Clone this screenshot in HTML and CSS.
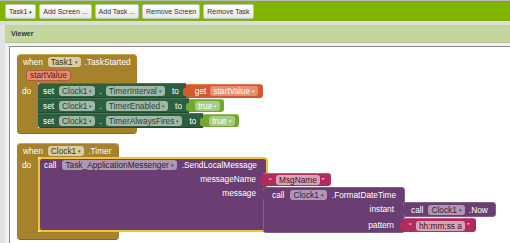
FILE: index.html
```html
<!DOCTYPE html>
<html>
<head>
    <link rel="stylesheet" href="styles.css">
    <meta name="viewport" content="width=device-width, initial-scale=1.0">
    <title>Blocks Editor</title>
</head>
<body>
    <div class="toolbar">
        <button class="tb-btn">Task1 <span class="tb-caret">▾</span></button>
        <button class="tb-btn">Add Screen ...</button>
        <button class="tb-btn">Add Task ...</button>
        <button class="tb-btn">Remove Screen</button>
        <button class="tb-btn">Remove Task</button>
    </div>
    <div class="strip"></div>
    <div class="viewer">
        <div class="viewer-head">Viewer</div>
        <div class="workspace">

            <!-- when Task1.TaskStarted -->
            <div class="event ev-started">
                <div class="hat">
                    <div class="row"><span>when</span><span class="pill pill-ev">Task1 <span class="caret">▾</span></span><span>.TaskStarted</span></div>
                    <div class="row row-param"><span class="param">startValue</span></div>
                </div>
                <div class="ev-body">
                    <div class="spine">do</div>
                    <div class="stack">
                        <div class="stmt">
                            <div class="setter"><span class="kw">set</span><span class="pill pill-set">Clock1 <span class="caret">▾</span></span><span>.</span><span class="pill pill-set">TimerInterval <span class="caret">▾</span></span><span class="to">to</span></div>
                            <div class="val val-get"><span>get</span><span class="pill pill-get">startValue <span class="caret">▾</span></span></div>
                        </div>
                        <div class="stmt">
                            <div class="setter"><span class="kw">set</span><span class="pill pill-set">Clock1 <span class="caret">▾</span></span><span>.</span><span class="pill pill-set">TimerEnabled <span class="caret">▾</span></span><span class="to">to</span></div>
                            <div class="val val-bool"><span class="pill pill-bool">true <span class="caret">▾</span></span></div>
                        </div>
                        <div class="stmt">
                            <div class="setter"><span class="kw">set</span><span class="pill pill-set">Clock1 <span class="caret">▾</span></span><span>.</span><span class="pill pill-set">TimerAlwaysFires <span class="caret">▾</span></span><span class="to">to</span></div>
                            <div class="val val-bool"><span class="pill pill-bool">true <span class="caret">▾</span></span></div>
                        </div>
                    </div>
                </div>
                <div class="foot"></div>
            </div>

            <!-- when Clock1.Timer -->
            <div class="event ev-timer">
                <div class="hat">
                    <div class="row"><span>when</span><span class="pill pill-ev">Clock1 <span class="caret">▾</span></span><span>.Timer</span></div>
                </div>
                <div class="ev-body">
                    <div class="spine">do</div>
                    <div class="call">
                        <div class="row"><span class="kw">call</span><span class="pill pill-call">Task_ApplicationMessenger <span class="caret">▾</span></span><span>.SendLocalMessage</span></div>
                        <div class="input in-name">
                            <span class="in-label">messageName</span>
                            <div class="val val-text"><span class="quote">“</span><span class="pill pill-text">MsgName</span><span class="quote">”</span></div>
                        </div>
                        <div class="input in-top">
                            <span class="in-label">message</span>
                            <div class="val fmt">
                                <div class="row"><span class="kw">call</span><span class="pill pill-call">Clock1 <span class="caret">▾</span></span><span>.FormatDateTime</span></div>
                                <div class="input in-instant">
                                    <span class="in-label">instant</span>
                                    <div class="val val-method"><span class="kw">call</span><span class="pill pill-call">Clock1 <span class="caret">▾</span></span><span>.Now</span></div>
                                </div>
                                <div class="input in-pattern">
                                    <span class="in-label">pattern</span>
                                    <div class="val val-text"><span class="quote">“</span><span class="pill pill-text">hh:mm:ss a</span><span class="quote">”</span></div>
                                </div>
                            </div>
                        </div>
                    </div>
                </div>
                <div class="foot"></div>
            </div>

        </div>
    </div>
</body>
</html>
```

FILE: styles.css
```css
*{
    box-sizing: border-box;
}
body{
    margin: 0;
    width: 510px;
    height: 243px;
    overflow: hidden;
    background: #e2e2e2;
    font-family: "Liberation Sans", Arial, sans-serif;
}

/* top toolbar */
.toolbar{
    height: 21px;
    background: #7fb500;
    border-top: 1px solid #b9b9b9;
    display: flex;
    align-items: center;
    gap: 3px;
    padding: 0 5px;
}
.tb-btn{
    height: 15px;
    padding: 0 3px;
    font-family: "Liberation Sans", Arial, sans-serif;
    font-size: 7px;
    color: #333;
    background: linear-gradient(#fdfdfd, #e8e8e8);
    border: 1px solid #c2c2c2;
    border-radius: 2px;
}
.tb-caret{
    font-size: 5px;
}
.strip{
    height: 4px;
    background: #dcdcdc;
}

/* viewer panel */
.viewer{
    margin-left: 5px;
    height: 218px;
    background: #efefef;
}
.viewer-head{
    height: 18px;
    background: #c5d69c;
    border-bottom: 1px solid #b4c58a;
    padding-left: 6px;
    display: flex;
    align-items: center;
    font-size: 7px;
    font-weight: bold;
    color: #333;
}
.workspace{
    position: relative;
    margin: 3px 0 0 4px;
    height: 200px;
    background: #fff;
    border-top: 1px solid #8a8a8a;
    border-left: 1px solid #8a8a8a;
}

/* blocks */
.event{
    position: absolute;
    display: flex;
    flex-direction: column;
    align-items: flex-start;
    color: #fff;
    font-size: 8.3px;
}
.ev-started{
    left: 7px;
    top: 7px;
}
.ev-timer{
    left: 7px;
    top: 96px;
}
.hat{
    background: #a6822c;
    border-top: 1px solid #c4a456;
    border-radius: 4px 4px 0 0;
    padding: 1px 6px 2px 6px;
}
.ev-started .hat, .ev-started .foot{
    width: 120px;
}
.ev-timer .hat, .ev-timer .foot{
    width: 102px;
}
.ev-timer .hat{
    padding-bottom: 0;
}
.row{
    display: flex;
    align-items: center;
    gap: 4px;
    height: 12px;
    white-space: nowrap;
}
.row-param{
    margin-top: 1px;
    padding-left: 3px;
}
.param{
    height: 11px;
    line-height: 9px;
    padding: 0 3px;
    background: #e38c75;
    border: 1px solid #b45840;
    border-radius: 3px;
    color: #5e1d10;
}
.ev-body{
    display: flex;
    align-items: flex-start;
}
.spine{
    width: 21px;
    align-self: stretch;
    background: #a6822c;
    padding: 1px 0 0 5px;
    line-height: 14px;
}
.foot{
    background: #a6822c;
    border-bottom: 1px solid #87691f;
    border-radius: 0 0 4px 4px;
    height: 6px;
}
.ev-timer .foot{
    height: 8px;
}
.stack{
    display: flex;
    flex-direction: column;
}
.stmt{
    display: flex;
    align-items: center;
    height: 15px;
}
.setter{
    height: 15px;
    background: #2d5f3f;
    border-top: 1px solid #46775a;
    border-bottom: 1px solid #1f4a30;
    display: flex;
    align-items: center;
    gap: 4px;
    padding: 0 7px 0 5px;
    white-space: nowrap;
}
.stmt:first-child .setter{
    border-radius: 3px 0 0 0;
}
.stmt:last-child .setter{
    border-radius: 0 0 0 3px;
}
.kw{
    margin-right: 1px;
}
.to{
    margin-left: 3px;
}

.pill{
    display: inline-flex;
    align-items: center;
    gap: 2px;
    height: 10px;
    padding: 0 3px;
    border-radius: 3px;
    line-height: 10px;
    color: #333;
    white-space: nowrap;
    flex-shrink: 0;
}
.caret{
    font-size: 5px;
    opacity: 0.8;
}
.pill-ev{
    background: #dccba3;
    margin-left: 1px;
}
.pill-set{
    background: #9fb9a9;
    color: #2f4437;
}
.pill-get{
    background: #e58f72;
    color: #fff;
}
.pill-bool{
    background: #a8cb84;
    color: #fff;
}
.pill-call{
    background: #ae97b5;
    color: #2e2233;
}
.pill-text{
    background: #dba1b6;
    color: #3a1524;
}

/* value blocks */
.val{
    position: relative;
    display: flex;
    align-items: center;
    gap: 4px;
    flex-shrink: 0;
    white-space: nowrap;
    border-radius: 0 3px 3px 0;
}
.val::before{
    content: "";
    position: absolute;
    left: -3px;
    top: 3px;
    width: 4px;
    height: 8px;
    background: inherit;
    border-radius: 2px 0 0 2px;
}
.val-get{
    height: 14px;
    background: #d05c2c;
    border-top: 1px solid #e07a50;
    padding: 0 5px 0 9px;
}
.val-bool{
    height: 13px;
    background: #74a72f;
    border-top: 1px solid #93c151;
    padding: 0 4px 0 6px;
}
.val-text{
    height: 13px;
    background: #b12c5d;
    border-top: 1px solid #c85582;
    padding: 0 4px 0 6px;
    gap: 2px;
}
.in-pattern .val-text{
    height: 14px;
}
.quote{
    font-size: 8px;
    line-height: 8px;
    height: 7px;
    width: 5px;
}
.val-method{
    height: 15px;
    background: #6a3e73;
    border: 1px solid #83608b;
    padding: 0 7px 0 7px;
}

/* procedure calls */
.call{
    width: 230px;
    background: #6a3e73;
    border: 2px solid #f4c430;
    border-radius: 4px;
    padding: 0 0 0 4px;
}
.call > .row{
    height: 12px;
    gap: 5px;
}
.input{
    display: flex;
    align-items: center;
}
.in-top{
    align-items: flex-start;
}
.in-label{
    flex-shrink: 0;
    text-align: right;
    line-height: 13px;
    white-space: nowrap;
}
.call > .input > .in-label{
    width: 212px;
}
.call > .input > .val{
    margin-left: 7px;
}
.in-name{
    margin-top: 2px;
}
.in-top{
    margin-top: 1px;
    margin-bottom: -3px;
}
.fmt{
    display: block;
    width: 142px;
    background: #6a3e73;
    border: 1px solid #83608b;
    border-radius: 3px;
    padding: 0 0 0 8px;
}
.fmt > .row{
    height: 13px;
    gap: 5px;
}
.fmt > .input{
    margin-top: 1px;
}
.fmt > .input > .in-label{
    width: 122px;
}
.fmt > .input > .val{
    margin-left: 9px;
}
```
